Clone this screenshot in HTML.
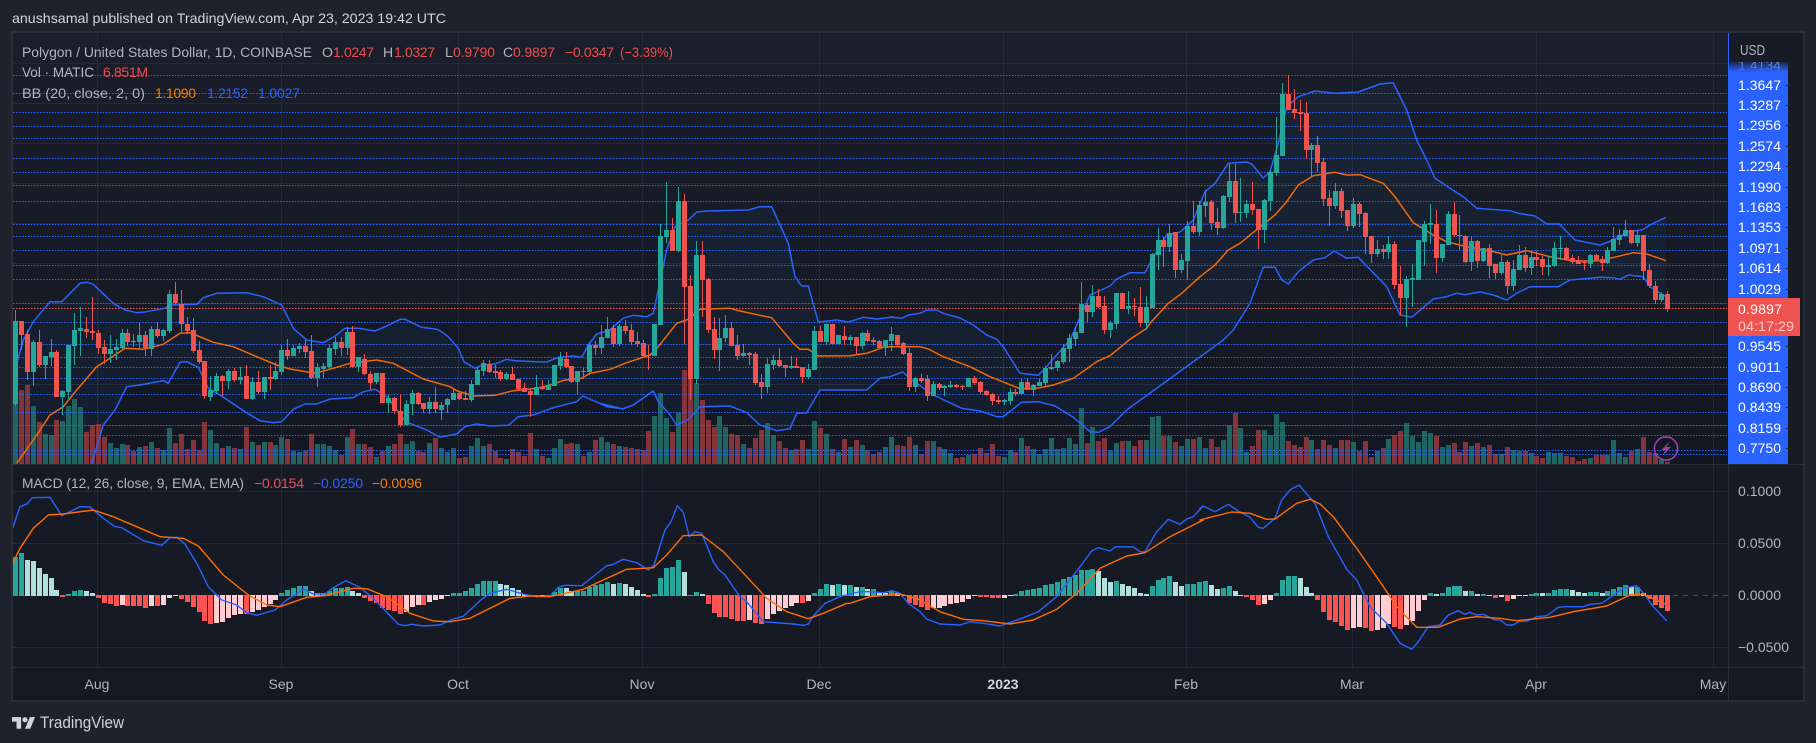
<!DOCTYPE html>
<html><head><meta charset="utf-8"><title>MATIC chart</title>
<style>
html,body{margin:0;padding:0;background:#1e222d;width:1816px;height:743px;overflow:hidden}
svg{display:block;position:absolute;left:0;top:0}
text{font-family:"Liberation Sans",sans-serif;font-size:14px;fill:#b2b5be}
.w{fill:#fff}.r{fill:#ef4d50}.b{fill:#2962ff}.o{fill:#f57c00}
</style></head><body>
<svg xmlns="http://www.w3.org/2000/svg" width="1816" height="743" viewBox="0 0 1816 743">
<defs>
<linearGradient id="bg" x1="0" y1="0" x2="0" y2="1"><stop offset="0" stop-color="#1a1e2a"/><stop offset="1" stop-color="#131722"/></linearGradient>
<linearGradient id="fade" x1="0" y1="0" x2="0" y2="1"><stop offset="0" stop-color="#2962ff" stop-opacity="0"/><stop offset="1" stop-color="#2962ff"/></linearGradient>
<clipPath id="mainclip"><rect x="13" y="33" width="1715" height="431"/></clipPath>
<clipPath id="macdclip"><rect x="13" y="465" width="1715" height="202"/></clipPath>
</defs>
<rect width="1816" height="743" fill="#1e222d"/>
<rect x="12" y="32" width="1792" height="669" fill="#131722" stroke="#2a2e39" stroke-width="2"/>
<rect x="13" y="33" width="1715" height="431" fill="url(#bg)"/>
<rect x="13" y="465" width="1715" height="202" fill="#161a25"/>
<rect x="1729" y="33" width="74" height="431" fill="#171b26"/>
<rect x="1729" y="465" width="74" height="202" fill="#171b26"/>
<rect x="13" y="668" width="1790" height="32" fill="#151924"/>
<g id="grid"></g>
<g id="main" clip-path="url(#mainclip)"></g>
<g id="macd" clip-path="url(#macdclip)"></g>
<rect x="12" y="464" width="1792" height="1" fill="#2a2e39"/>
<rect x="12" y="667" width="1792" height="1" fill="#2a2e39"/>
<rect x="1728" y="465" width="1" height="236" fill="#2a2e39"/>

<text x="12" y="23" textLength="434" lengthAdjust="spacingAndGlyphs" style="fill:#d1d4dc">anushsamal published on TradingView.com, Apr 23, 2023 19:42 UTC</text>

<text x="22" y="57" textLength="290" lengthAdjust="spacingAndGlyphs">Polygon / United States Dollar, 1D, COINBASE</text>
<text x="322" y="57">O</text><text class="r" x="333" y="57" textLength="41">1.0247</text>
<text x="383" y="57">H</text><text class="r" x="394" y="57" textLength="41">1.0327</text>
<text x="445" y="57">L</text><text class="r" x="453" y="57" textLength="42">0.9790</text>
<text x="503" y="57">C</text><text class="r" x="513" y="57" textLength="42">0.9897</text>
<text class="r" x="565" y="57" textLength="49">−0.0347</text>
<text class="r" x="620" y="57" textLength="53" lengthAdjust="spacingAndGlyphs">(−3.39%)</text>
<text x="22" y="77" textLength="72" lengthAdjust="spacingAndGlyphs">Vol · MATIC</text>
<text class="r" x="103" y="77" textLength="45">6.851M</text>
<text x="22" y="98" textLength="123" lengthAdjust="spacingAndGlyphs">BB (20, close, 2, 0)</text>
<text class="o" x="155" y="98" textLength="41">1.1090</text>
<text class="b" x="207" y="98" textLength="41">1.2152</text>
<text class="b" x="258" y="98" textLength="42">1.0027</text>
<text x="22" y="488" textLength="222" lengthAdjust="spacingAndGlyphs">MACD (12, 26, close, 9, EMA, EMA)</text>
<text class="r" x="254" y="488" textLength="50">−0.0154</text>
<text class="b" x="313" y="488" textLength="50">−0.0250</text>
<text class="o" x="372" y="488" textLength="50">−0.0096</text>

<!-- price axis -->
<text x="1738" y="70" textLength="43" style="fill:#8d93a8">1.4134</text>
<rect x="1728" y="60" width="60" height="12" fill="url(#fade)"/>
<rect x="1728" y="72" width="60" height="392" fill="#2962ff"/>
<rect x="1729" y="33" width="74" height="29" fill="#171b26"/>
<rect x="1728" y="33" width="1" height="40" fill="#2962ff"/>
<text x="1740" y="55" textLength="25" lengthAdjust="spacingAndGlyphs" style="font-size:15px">USD</text>
<g id="ticks"></g>
<g>
<text class="w" x="1738" y="90" textLength="43">1.3647</text>
<text class="w" x="1738" y="110" textLength="43">1.3287</text>
<text class="w" x="1738" y="130" textLength="43">1.2956</text>
<text class="w" x="1738" y="151" textLength="43">1.2574</text>
<text class="w" x="1738" y="171" textLength="43">1.2294</text>
<text class="w" x="1738" y="192" textLength="43">1.1990</text>
<text class="w" x="1738" y="212" textLength="43">1.1683</text>
<text class="w" x="1738" y="232" textLength="43">1.1353</text>
<text class="w" x="1738" y="253" textLength="43">1.0971</text>
<text class="w" x="1738" y="273" textLength="43">1.0614</text>
<text class="w" x="1738" y="294" textLength="43">1.0029</text>
<text class="w" x="1738" y="351" textLength="43">0.9545</text>
<text class="w" x="1738" y="372" textLength="43">0.9011</text>
<text class="w" x="1738" y="392" textLength="43">0.8690</text>
<text class="w" x="1738" y="412" textLength="43">0.8439</text>
<text class="w" x="1738" y="433" textLength="43">0.8159</text>
<text class="w" x="1738" y="453" textLength="43">0.7750</text>
</g>
<rect x="1728" y="298" width="72" height="38" fill="#ef5350"/>
<text class="w" x="1738" y="314" textLength="44">0.9897</text>
<text x="1738" y="331" textLength="56" lengthAdjust="spacingAndGlyphs" style="fill:#fbc9c8">04:17:29</text>

<text x="1738" y="496" textLength="43">0.1000</text>
<text x="1738" y="548" textLength="43">0.0500</text>
<text x="1738" y="600" textLength="43">0.0000</text>
<text x="1738" y="652" textLength="51">−0.0500</text>

<!-- time axis -->
<g text-anchor="middle">
<text x="97" y="689">Aug</text><text x="281" y="689">Sep</text><text x="458" y="689">Oct</text>
<text x="642" y="689">Nov</text><text x="819" y="689">Dec</text>
<text x="1003" y="689" style="fill:#d1d4dc;font-weight:bold">2023</text>
<text x="1186" y="689">Feb</text><text x="1352" y="689">Mar</text><text x="1536" y="689">Apr</text><text x="1713" y="689">May</text>
</g>

<!-- lightning badge -->
<circle cx="1666" cy="448.5" r="11.6" fill="none" stroke="#9c3fa8" stroke-width="1.6"/>
<path d="M1670 441 L1661.5 450 L1665.5 450 L1662.5 455.5 L1671 447 L1666.5 447 Z" fill="#9c3fa8"/>

<!-- logo -->
<g transform="translate(12,714.5) scale(.65)" fill="#d1d4dc">
<path d="M14 22H7V11H0V4h14v18zM28 22h-8l7.5-18h8L28 22z"/><circle cx="20" cy="8" r="4"/>
</g>
<text x="40" y="728" textLength="84" lengthAdjust="spacingAndGlyphs" style="font-size:17px;fill:#d1d4dc">TradingView</text>
</svg>

<script>
(function(){
var X=function(i){return Math.round(15+5.92*i)};
var out=[],grid=[];
[97,281,458,642,819,1003,1186,1352,1536,1713].forEach(function(x){grid.push('<rect x="'+x+'" y="33" width="1" height="634" fill="#252935"/>')});
[63,103,143,183,223,263,303,344,384,425,491,543,647].forEach(function(y){grid.push('<rect x="13" y="'+y+'" width="1715" height="1" fill="#252935"/>')});
document.getElementById('grid').innerHTML=grid.join('');

var C=[];
function blk(start,base,s){s.trim().split(/\s+/).forEach(function(t,k){
  var c=t[0],a=t.slice(1).split(',').map(Number);
  C[start+k]={c:c,t:base+a[0]/3,b:base+a[1]/3,wt:base+Math.min(a[2],a[0])/3,wb:base+Math.max(a[3],a[1])/3};
});}
blk(0,250,"G212,460,180,468 R212,255,212,300 R252,365,240,390 G276,366,270,408 R276,346,240,350 G318,345,318,388 G306,322,268,348 R306,440,300,440 G422,440,420,495 G284,426,284,445 G240,288,190,345 G234,242,170,318 R238,248,200,264 R244,250,142,270 R250,294,240,312 R292,312,270,342 G297,312,255,340 G292,300,268,330 G250,294,238,300 R250,276,238,290 R272,275,252,290 G256,276,220,300 R256,295,244,318 G236,296,228,318 R238,258,215,262 G240,258,238,275 G132,244,120,248 R132,160,96,165 R162,222,120,245 R222,244,200,250 R240,304,205,310 R300,335,272,340 R334,440,334,448 G420,440,378,452 G378,424,368,430 R378,392,376,440 G362,392,356,415 R362,390,355,398 G382,390,350,400 R378,446,345,448 G396,446,380,450 R396,426,362,430 G380,426,380,446 R380,386,345,420 G363,386,335,388 G300,366,285,375 R300,318,268,330 G294,318,286,320 G288,296,280,310 R288,305,270,325 R304,386,255,388 G352,386,340,412 G348,356,340,385 G294,352,284,355 G276,296,262,315 R276,294,262,318 G246,294,230,315 R246,350,228,352 G322,352,320,365 R328,374,312,376 R372,398,362,420 G370,398,368,400 R370,460,370,460 G444,460,432,490 R444,484,440,490 R484,525,432,532 G462,525,450,525 G430,462,420,495 R430,462,425,465 R458,476,458,488 G456,476,440,490 R456,478,412,490 G464,480,455,508 G448,466,445,490");
blk(74,230,"G489,510,478,510 R489,507,486,510 R504,510,484,510 G462,511,450,516 G420,465,412,465 G400,424,390,438 R402,426,390,428 R423,429,404,442 R426,447,420,453 G432,447,426,450 R432,450,412,450 R447,478,447,480 R475,486,460,488 R483,495,475,563 G471,495,435,495 R471,477,450,480 G465,480,450,480 G405,468,405,468 G383,408,366,420 R387,412,366,414 R408,456,408,458 G423,456,423,492 R423,426,414,446 G345,426,337,435 R345,354,333,375 G321,354,286,372 G297,324,262,324 R294,342,285,350 G288,342,282,348 R288,303,270,312 R300,336,282,345 R333,342,306,352 R339,378,330,378 R375,378,345,420");
blk(108,170,"G462,558,462,558 G198,465,162,465 G180,200,36,218 R180,243,144,243 G93,243,50,245 R93,350,72,522 R348,627,315,690 G255,627,213,642 R255,330,213,440 R327,480,324,490 R477,540,440,565 G504,540,445,605 G474,504,435,516 R474,528,456,528 R525,558,495,570 G548,558,522,560 R549,555,545,585 R552,640,546,645 R636,651,612,687 G582,651,564,669 G570,585,555,600 R570,588,534,592 R585,594,585,621 G588,594,558,597 R588,594,564,594 R591,621,591,639 G597,621,582,627 G483,600,468,600 R483,516,468,516 G462,516,462,525 R462,522,462,522 G495,522,495,522 R498,510,468,525 G501,510,495,525 R501,528,501,555 G489,528,486,537 R489,513,480,516 R510,516,502,525 R513,534,510,537 G510,534,510,558");
blk(148,220,"G342,362,322,395 R345,375,345,380 R369,402,366,405 R399,501,385,515 G474,501,472,516 R474,483,462,490 R477,528,464,542 G492,528,484,530 R492,504,490,510 G498,504,495,528 G495,501,484,504 R495,501,491,503 R497,500,495,510 G474,501,474,501 R474,489,468,495 R486,516,483,522 R513,525,510,528 R522,543,519,555 R540,546,528,552 G540,546,537,555 G516,543,504,555 R516,522,507,528 G486,522,474,525 R486,510,474,510 G495,510,492,528 G486,498,476,498 G444,489,438,498 G441,447,402,450 G423,444,420,453 G384,426,372,432 G354,387,342,426 G336,357,322,378 G252,339,186,339 R255,276,249,306 G228,276,195,290 R228,261,208,264 R258,330,228,342 G309,330,303,354 G219,312,219,327 R219,267,219,267 G258,267,213,282 R258,261,234,288 R261,309,202,321 G261,309,228,331 G102,264,100,264");
blk(193,60,"G540,585,505,630 R540,561,530,620 G519,561,492,576 R516,630,516,654 G600,630,582,638 G498,603,484,660 R498,516,424,522 G435,516,424,530 G426,438,390,470 R426,489,420,510 R486,504,445,525 G408,504,404,506 G363,411,312,426 R363,459,312,490 G456,459,354,486 G432,459,420,475 R432,450,366,465 R447,510,447,568 G420,510,417,548 G336,423,333,454 G285,339,171,348 G102,288,69,288 R102,150,45,150 R147,159,87,177 R156,162,120,213 R159,270,126,297 G255,270,250,348 R255,309,228,336 R306,417,294,438 R414,438,390,498 G393,438,369,447 R393,453,384,474 R450,498,450,513 G432,498,414,504 R432,462,426,500 R459,531,456,582 R528,582,528,609 G567,582,540,591 R567,576,555,597 G552,576,528,597 R552,675,543,687 R672,714,618,765 G657,714,648,801 G654,660,612,741 G540,660,540,660 G492,546,483,618 G489,495,432,552 R492,594,450,639 G552,594,552,606 G462,555,453,555 R462,525,426,531 R525,528,465,570 R528,606,525,609 G543,606,528,633 R543,603,540,624 G564,603,564,606 R564,618,552,654 R612,639,612,657 G606,639,585,645 R606,678,600,702 G627,678,600,693 G585,630,555,630 R585,624,561,636 G591,624,570,645 R591,600,573,618 R597,621,588,645 G615,621,588,648 G564,618,546,621 G564,567,528,600 R564,597,561,600 R594,606,585,612 R600,612,588,612 R606,609,600,630 G585,612,582,624 R585,600,582,603 R597,609,588,633 G570,609,561,612 G537,573,501,573 G525,540,507,555 G510,528,480,528 R510,549,510,552 G525,549,510,561 R525,633,525,660 R630,678,612,685 R678,720,662,732 G702,720,695,726 R702,747,692,756");

var V=[];
function vol(start,bottom,arr){arr.forEach(function(v,k){V[start+k]=(bottom-v)/3});}
vol(0,641,[405,420,405,468,516,550,555,510,513,468,445,471,546,525,522,561,577,594,582,585,603,591,588,576,594,600,534,579,552,597,570,600,516,540,579,594,588,594,597,531,576,585,576,576,585,561,567,603,606,603,552,582,582,588,600,615,561,537,582,582,591,621,603,588,582,552,582,573,603,606,579,564,594,606]);
vol(72,703,[655,666,655,684,681,648,624,648,642,663,684,687,657,666,678,609,657,678,684,654,627,642,639,642,678,666,630,621,636,642,648,651,654,657,660,603,558,490,564]);
vol(111,882,[786,729,600,620,640,690,750,771,738,771,792,795,822,834,804,780,759,795,813,834,840,837,810,837,753,774,792,837,846,807,831,810,825,840,852,846,831,801,825]);
vol(150,733,[678,651,675,702,663,663,681,687,699,714,711,705,702,684,699,672,708,711,690,696,654,678,687,702,687,654,687,684,654,672,564,669,621,663,654,690,669,663,663,678,660,660,591,588]);
vol(194,192,[108,108,126,138,117,117,110]);
vol(201,192,[144,117,141,120,75,38,84,156,138,90,90,105,42,66,123,135,141,111,120,147,120,135,144,120,120,126,153,123,171,153,144,117,105,93,69,108,126,93,99,108,141,135,129,156,126,138,129,141,135,162,162,141,150,153,153,159,168,174,156,159,159,168,171,183,177,174,165,165,165,120,159,171,153,147,111,156,159,180,186]);

function seg(x0,y0,s){return s.trim().split(/\s+/).map(function(p){var a=p.split(',');return [+(x0+a[0]/3).toFixed(1),+(y0+a[1]/3).toFixed(1)]});}
var upper=[].concat(
 seg(0,250,"50,340 70,270 100,215 150,155 185,155 240,100 262,97 280,103 340,160 375,180 410,188 440,185 495,175 510,165 590,163 610,143 650,130 740,128 790,140 845,165 880,235 920,270 970,278 1000,262 1035,235 1075,235 1125,243 1160,228 1200,208 1215,208 1265,232 1310,238"),
 seg(440,230,"0,302 25,320 55,355 72,395 105,415 125,405 165,402 200,388 225,392 290,395 320,396 355,382 400,378 425,382 445,345 470,312 510,300"),
 seg(600,170,"40,470 70,445 100,436 140,440 160,430 175,360 200,240 225,170 265,150 290,126 320,123 445,120 480,110 515,110 565,220 585,320 605,348 625,348 655,456 710,450 745,456 790,442 830,447 880,441"),
 seg(890,220,"0,291 35,295 55,285 90,280 110,270 140,270 160,280 210,294 250,315 290,345 320,358 340,380 390,460 445,466 465,445 540,360 580,270 600,225 660,198 680,177 720,158 765,158 790,110"),
 seg(1150,60,"50,525 90,516 130,480 165,395 195,370 235,310 290,306 305,312 340,354 360,335 385,250 410,140 445,110 495,93 555,100 625,96 690,72 730,68 770,150 800,240 830,300 855,355 900,385 940,410 980,445 1080,452 1105,460 1155,468 1190,492 1228,492 1275,540 1350,555 1390,540 1435,515 1475,510"),
 seg(1600,20,"160,610 198,592"));
var basis=[].concat(
 seg(0,250,"50,640 100,570 150,495 190,470 230,420 290,350 330,325 375,295 430,298 490,283 540,250 570,248 640,277 700,290 770,320 830,345 870,357 945,370 1000,355 1050,340 1130,330 1180,340 1270,387"),
 seg(440,230,"30,470 50,482 100,498 165,496 220,482 290,475 320,468 375,450 425,445 450,430 510,418 560,398 630,375"),
 seg(600,170,"150,555 175,530 230,460 265,448 300,418 390,415 420,423 480,436 515,443 580,520 600,538 625,538 655,558 750,557 800,550 850,532"),
 seg(890,220,"0,380 90,380 115,387 160,410 240,440 300,470 390,506 440,505 490,495 550,475 620,425 660,407 720,358 770,325"),
 seg(1150,60,"0,790 55,730 95,700 150,650 195,615 235,570 270,550 325,505 375,465 410,425 445,375 490,347 555,337 590,345 630,344 700,370 735,410 790,488 850,525 890,545 950,560 1030,575 1070,585 1130,572 1200,590 1270,603"),
 seg(1600,20,"0,722 50,710 100,698 140,702 198,722"));
var lower=[].concat(
 seg(0,250,"275,640 310,525 345,480 380,410 420,405 490,392 505,400 540,337 560,335 595,352 625,415 660,435 735,485 780,512 820,518 845,515 880,478 915,462 950,462 990,447 1060,443 1090,425 1125,418 1160,440 1217,515 1280,540"),
 seg(440,230,"0,622 50,612 75,590 110,582 150,588 205,586 235,560 280,555 340,533 410,515 428,498 490,525 550,537"),
 seg(600,170,"0,700 20,710 70,716 100,705 160,663 175,695 210,735 230,765 265,748 300,710 390,708 440,728 480,765 530,782 570,776 590,730 620,728 660,660 720,660 800,660 840,625"),
 seg(890,220,"0,470 38,456 65,480 130,525 215,565 270,573 320,590 340,590 395,547 445,545 495,558 550,592 600,635 625,637 660,620 710,570"),
 seg(1150,60,"220,840 250,810 300,730 340,622 375,622 395,660 415,672 445,635 490,600 525,593 553,573 590,595 625,592 710,680 750,765 785,772 850,717 890,710 920,700 945,704 990,696 1030,705 1070,720 1100,700 1140,680 1225,680 1260,660 1320,655"),
 seg(1600,20,"0,772 40,773 60,778 85,765 130,770 150,800 198,830"));
var ml=[].concat(
 seg(0,460,"36,210 60,140 80,132 97,113 150,112 185,167 240,140 270,141 310,175 345,200 365,203 430,242 485,256 510,233 530,232 555,252 590,310 625,380 665,420 710,435 740,458 770,466 825,450 860,420 910,388 940,402 975,402 1000,383 1037,362 1080,382 1120,415 1195,493 1215,497 1235,493 1270,498 1320,495 1360,477 1390,469"),
 seg(480,470,"0,392 30,370 80,358 130,372 170,380 210,378 235,352 255,346 305,347 330,327 380,287 395,285 430,268 470,278 505,300 522,285 555,180 573,155 592,107 610,127 628,200 645,185 665,190 700,275 715,297 735,315 780,380 800,395 850,455 940,462 970,466 985,462 1000,438 1035,400 1085,378"),
 seg(850,470,"30,365 60,365 100,368 125,362 150,370 175,400 210,425 230,447 270,462 330,465 360,455 400,460 450,468 510,447 565,425 620,380 690,290 725,243 745,233 780,243 797,230 850,231 870,245 885,245 920,185 955,148 990,163 1010,147 1030,140 1060,108"),
 seg(1200,400,"0,325 10,318 45,335 85,313 115,333 150,352 175,382 190,385 225,355 245,300 270,270 297,255 345,310 385,410 440,508 470,540 510,620 560,670 600,730 635,748 655,725 685,680 720,675 745,645 775,632 795,643 810,637 830,645 850,643 885,660 900,660 920,675 940,675 955,665 985,662 1010,650 1040,647 1075,622 1095,620 1150,620 1170,613 1205,610 1270,565 1310,557 1335,585 1360,620 1400,663"));
var sl=[].concat(
 seg(0,460,"36,315 60,265 100,205 145,165 190,162 280,150 340,170 480,230 550,235 595,258 670,345 745,405 800,435 840,440 920,412 975,407 1060,385 1100,386 1160,410 1230,460 1300,483 1350,485 1410,475"),
 seg(480,470,"0,430 90,385 150,378 210,380 310,358 370,330 440,298 520,293 560,255 610,197 665,195 730,245 800,320 860,385 920,425 985,446 1030,430 1100,400"),
 seg(850,470,"0,400 60,380 150,372 200,385 270,425 340,448 400,452 480,462 550,450 620,418 680,370 750,295 830,258 885,248 960,200 1060,150"),
 seg(1200,400,"0,360 30,352 95,336 150,340 200,358 225,357 290,310 330,298 360,312 400,350 470,445 540,545 590,620 650,682 715,682 780,657 830,650 900,655 950,662 1050,652 1120,635 1220,618 1290,585 1330,583 1395,612"));
function P(a){return a.map(function(p){return p[0]+','+p[1]}).join(' ')}

var up0=upper[0];
var poly=[[15,up0[1]+40]].concat(upper).concat(lower.slice().reverse()).concat([[92,470],[15,470]]);
out.push('<polygon points="'+P(poly)+'" fill="#2196f3" fill-opacity=".055"/>');
for(var i=0;i<C.length;i++){var h=V[i]||0;if(!C[i])continue;
 out.push('<rect x="'+(X(i)-2)+'" y="'+(464-h).toFixed(0)+'" width="5" height="'+h.toFixed(0)+'" fill="'+(C[i].c=='G'?'#1f6460':'#843438')+'" shape-rendering="crispEdges"/>');}
[75,93,112,126,138,158,172,185,201,224,236,250,265,279,303,322,344,357,367,378,394,412,425,435,450,454].forEach(function(y){
 out.push('<line x1="13" x2="1727" y1="'+(y+.5)+'" y2="'+(y+.5)+'" stroke="#2962ff" stroke-width="1" stroke-dasharray="1.5 1.5"/>');});
out.push('<line x1="13" x2="1727" y1="308.5" y2="308.5" stroke="#ef5350" stroke-width="1" stroke-dasharray="1.5 1.5"/>');
out.push('<polyline points="'+P(upper)+'" fill="none" stroke="#2962ff" stroke-width="1.5" stroke-linejoin="round"/>');
out.push('<polyline points="'+P(lower)+'" fill="none" stroke="#2962ff" stroke-width="1.5" stroke-linejoin="round"/>');
out.push('<polyline points="'+P(basis)+'" fill="none" stroke="#f26a06" stroke-width="1.5" stroke-linejoin="round"/>');
for(i=0;i<C.length;i++){var c=C[i];if(!c)continue;var col=c.c=='G'?'#26a69a':'#ef5350',x=X(i);
 out.push('<rect x="'+x+'" y="'+c.wt.toFixed(0)+'" width="1" height="'+Math.max(1,(c.wb-c.wt)).toFixed(0)+'" fill="'+col+'" shape-rendering="crispEdges"/>');
 out.push('<rect x="'+(x-2)+'" y="'+c.t.toFixed(0)+'" width="5" height="'+Math.max(1,(c.b-c.t)).toFixed(0)+'" fill="'+col+'" shape-rendering="crispEdges"/>');}
document.getElementById('main').innerHTML=out.join('');

var H=[];function hh(s,a){a.forEach(function(v,k){H[s+k]=v/3});}
hh(0,[117,130,108,105,84,66,54,18,-5,5,15,18,14,9,-8,-24,-28,-33,-30,-32,-32,-32,-38,-32,-32,-30,-8,-3,-12,-20,-36,-50,-78,-86,-84,-80,-68,-60,-56,-58,-50,-45,-35,-28,-15,8,18,24,30,30,14,10,8,14,24,24,28,15,8,-8,-18,-24,-40,-44,-48,-56,-50,-35,-30,-30,-20,-16,-12,-4,8,10,14,24,35]);
hh(79,[44,44,44,35,32,25,17,7,3,3,2,2,12,25,24,15,15,15,27,32,35,41,35,39,35,27,17,5,-7,5,54,84,87,108,72,-4,12,5,-28,-55,-67,-67,-73,-79,-79,-76,-85,-88,-73,-58,-49,-40,-34,-25,-25,-19,8,21,36,32,36,33]);
hh(141,[33,27,27,20,20,12,10,14,8,3,-25,-30,-35,-44,-40,-38,-34,-28,-24,-20,-11,-4,-6,-6,-10,-10,-9,-4,5,14,17,20,24,33,36,42,51,57,62,78,78,81,75,54,42,45,36,30,24,9,5,30,48,54,60,42,30,36,36,42]);
hh(201,[45,33,21,24,30,15,3,-6,-15,-30,-27,-14,8,48,60,60,54,27,9,-15,-52,-75,-81,-93,-105,-99,-96,-99,-108,-105,-99,-87,-96,-102,-90,-78,-48,-15,8,6,8,27,30,30,15,15,6,6,1,-9,-6,-18,-12,-4,-2,6,10,9,10,18,21,21,18,12,9,12,12,9,15,21,27,33,27,27,8,-12,-30,-39,-48]);
var m=[];
m.push('<line x1="13" x2="1728" y1="595.5" y2="595.5" stroke="#787b86" stroke-opacity=".55" stroke-dasharray="5 5"/>');
for(i=0;i<H.length;i++){var v=H[i],pv=i?H[i-1]:0,col2,xx=X(i)-2,hr=Math.max(1,Math.round(Math.abs(v)));
 if(v>=0)col2=(v>=pv?'#26a69a':'#b2dfdb');else col2=(v<=pv?'#ff5252':'#ffcdd2');
 m.push('<rect x="'+xx+'" y="'+(v>=0?595-hr+1:595)+'" width="5" height="'+hr+'" fill="'+col2+'" shape-rendering="crispEdges"/>');}
m.push('<polyline points="'+P(ml)+'" fill="none" stroke="#2962ff" stroke-width="1.4" stroke-linejoin="round"/>');
m.push('<polyline points="'+P(sl)+'" fill="none" stroke="#ff6d00" stroke-width="1.4" stroke-linejoin="round"/>');
document.getElementById('macd').innerHTML=m.join('');

var t=[];[85,105,125,146,166,187,207,227,248,268,289,346,367,387,407,428,448,464].forEach(function(y){t.push('<rect x="1786" y="'+y+'" width="4" height="1" fill="#2a2e39"/>')});
document.getElementById('ticks').innerHTML=t.join('');
})();
</script>
</body></html>
